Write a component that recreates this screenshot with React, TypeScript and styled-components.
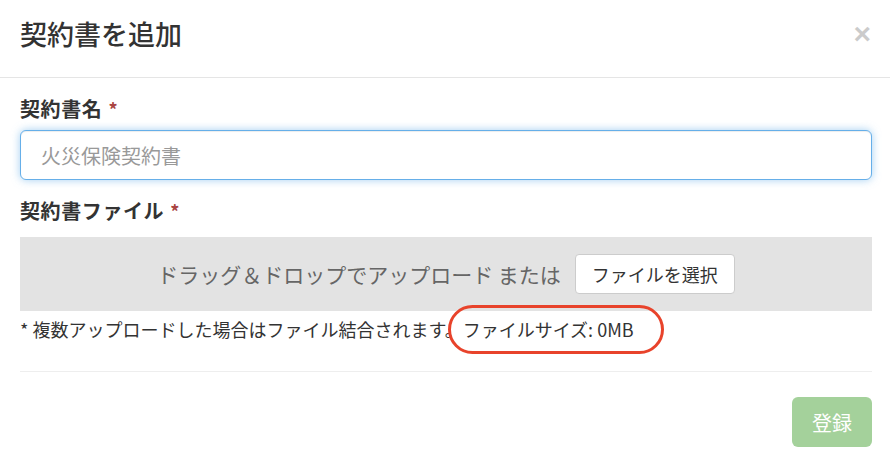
import React from "react";
import styled, { createGlobalStyle } from "styled-components";

const GlobalStyle = createGlobalStyle`
  html, body {
    margin: 0;
    padding: 0;
    background: #fff;
  }
  body {
    font-family: "Noto Sans CJK JP", "Noto Sans", sans-serif;
    color: #333;
  }
`;

const Modal = styled.div`
  width: 890px;
  background: #fff;
`;

const Header = styled.div`
  display: flex;
  align-items: flex-start;
  justify-content: space-between;
  box-sizing: border-box;
  height: 78px;
  padding: 16px 19px 0 20px;
  border-bottom: 1px solid #e5e5e5;
`;
Header.displayName = "Header";

const Title = styled.h4`
  margin: 0;
  font-size: 27px;
  line-height: 36px;
  font-weight: 500;
  color: #333;
`;

const Close = styled.button`
  margin-top: 3px;
  padding: 0;
  border: 0;
  background: transparent;
  font-family: "Liberation Sans", Arial, sans-serif;
  font-size: 30px;
  font-weight: bold;
  line-height: 1;
  color: #000;
  opacity: 0.2;
  cursor: pointer;
`;

const Body = styled.div`
  padding: 18px 18px 0 20px;
`;

const Field = styled.div<{ $gap?: number }>`
  margin-bottom: ${(p) => p.$gap ?? 0}px;
`;

const Label = styled.label<{ $space: number }>`
  display: block;
  font-size: 20px;
  letter-spacing: 0.6px;
  line-height: 25px;
  font-weight: bold;
  color: #333;
  margin-bottom: ${(p) => p.$space}px;
`;

const Required = styled.span`
  margin-left: 6px;
  color: #a94442;
  font-size: 18px;
`;

const Input = styled.input`
  display: block;
  box-sizing: border-box;
  width: 100%;
  height: 50px;
  padding: 0 20px;
  font-family: inherit;
  font-size: 20px;
  color: #555;
  border: 1px solid #66afe9;
  border-radius: 6px;
  outline: 0;
  box-shadow: inset 0 1px 1px rgba(0, 0, 0, 0.075),
    0 0 8px rgba(102, 175, 233, 0.6);

  &::placeholder {
    color: #999;
  }
`;

const DropZone = styled.div`
  display: flex;
  align-items: center;
  justify-content: center;
  gap: 14px;
  height: 74px;
  background: #e3e3e3;
`;

const DropText = styled.span`
  font-size: 21px;
  color: #666;
`;

const PickButton = styled.button`
  box-sizing: border-box;
  height: 40px;
  padding: 0 16px;
  font-family: inherit;
  font-size: 18px;
  color: #333;
  background: #fff;
  border: 1px solid #ccc;
  border-radius: 4px;
  cursor: pointer;
`;

const Note = styled.div`
  margin-top: 6px;
  font-size: 18px;
  line-height: 24px;
  color: #333;
  white-space: nowrap;
`;

const SizeInfo = styled.span`
  position: relative;

  &::after {
    content: "";
    position: absolute;
    left: -15px;
    right: -30px;
    top: -11px;
    bottom: -12px;
    border: 3.5px solid #e8432b;
    border-radius: 999px;
  }
`;

const Divider = styled.hr`
  margin: 30px 0 0 0;
  border: 0;
  border-top: 1px solid #eee;
`;

const Footer = styled.div`
  display: flex;
  justify-content: flex-end;
  padding-top: 25px;
`;

const SubmitButton = styled.button`
  width: 80px;
  height: 50px;
  font-family: inherit;
  font-size: 20px;
  color: #fff;
  background: #a4d19b;
  border: 0;
  border-radius: 6px;
  cursor: not-allowed;
`;

export default function App() {
  return (
    <>
      <GlobalStyle />
      <Modal>
        <Header>
          <Title>契約書を追加</Title>
          <Close aria-label="close">×</Close>
        </Header>
        <Body>
          <Field $gap={18}>
            <Label $space={8}>
              契約書名<Required>*</Required>
            </Label>
            <Input placeholder="火災保険契約書" autoFocus />
          </Field>
          <Field>
            <Label $space={13}>
              契約書ファイル<Required>*</Required>
            </Label>
            <DropZone>
              <DropText>ドラッグ＆ドロップでアップロード または</DropText>
              <PickButton>ファイルを選択</PickButton>
            </DropZone>
            <Note>
              * 複数アップロードした場合はファイル結合されます。
              <SizeInfo>ファイルサイズ: 0MB</SizeInfo>
            </Note>
          </Field>
          <Divider />
          <Footer>
            <SubmitButton disabled>登録</SubmitButton>
          </Footer>
        </Body>
      </Modal>
    </>
  );
}
